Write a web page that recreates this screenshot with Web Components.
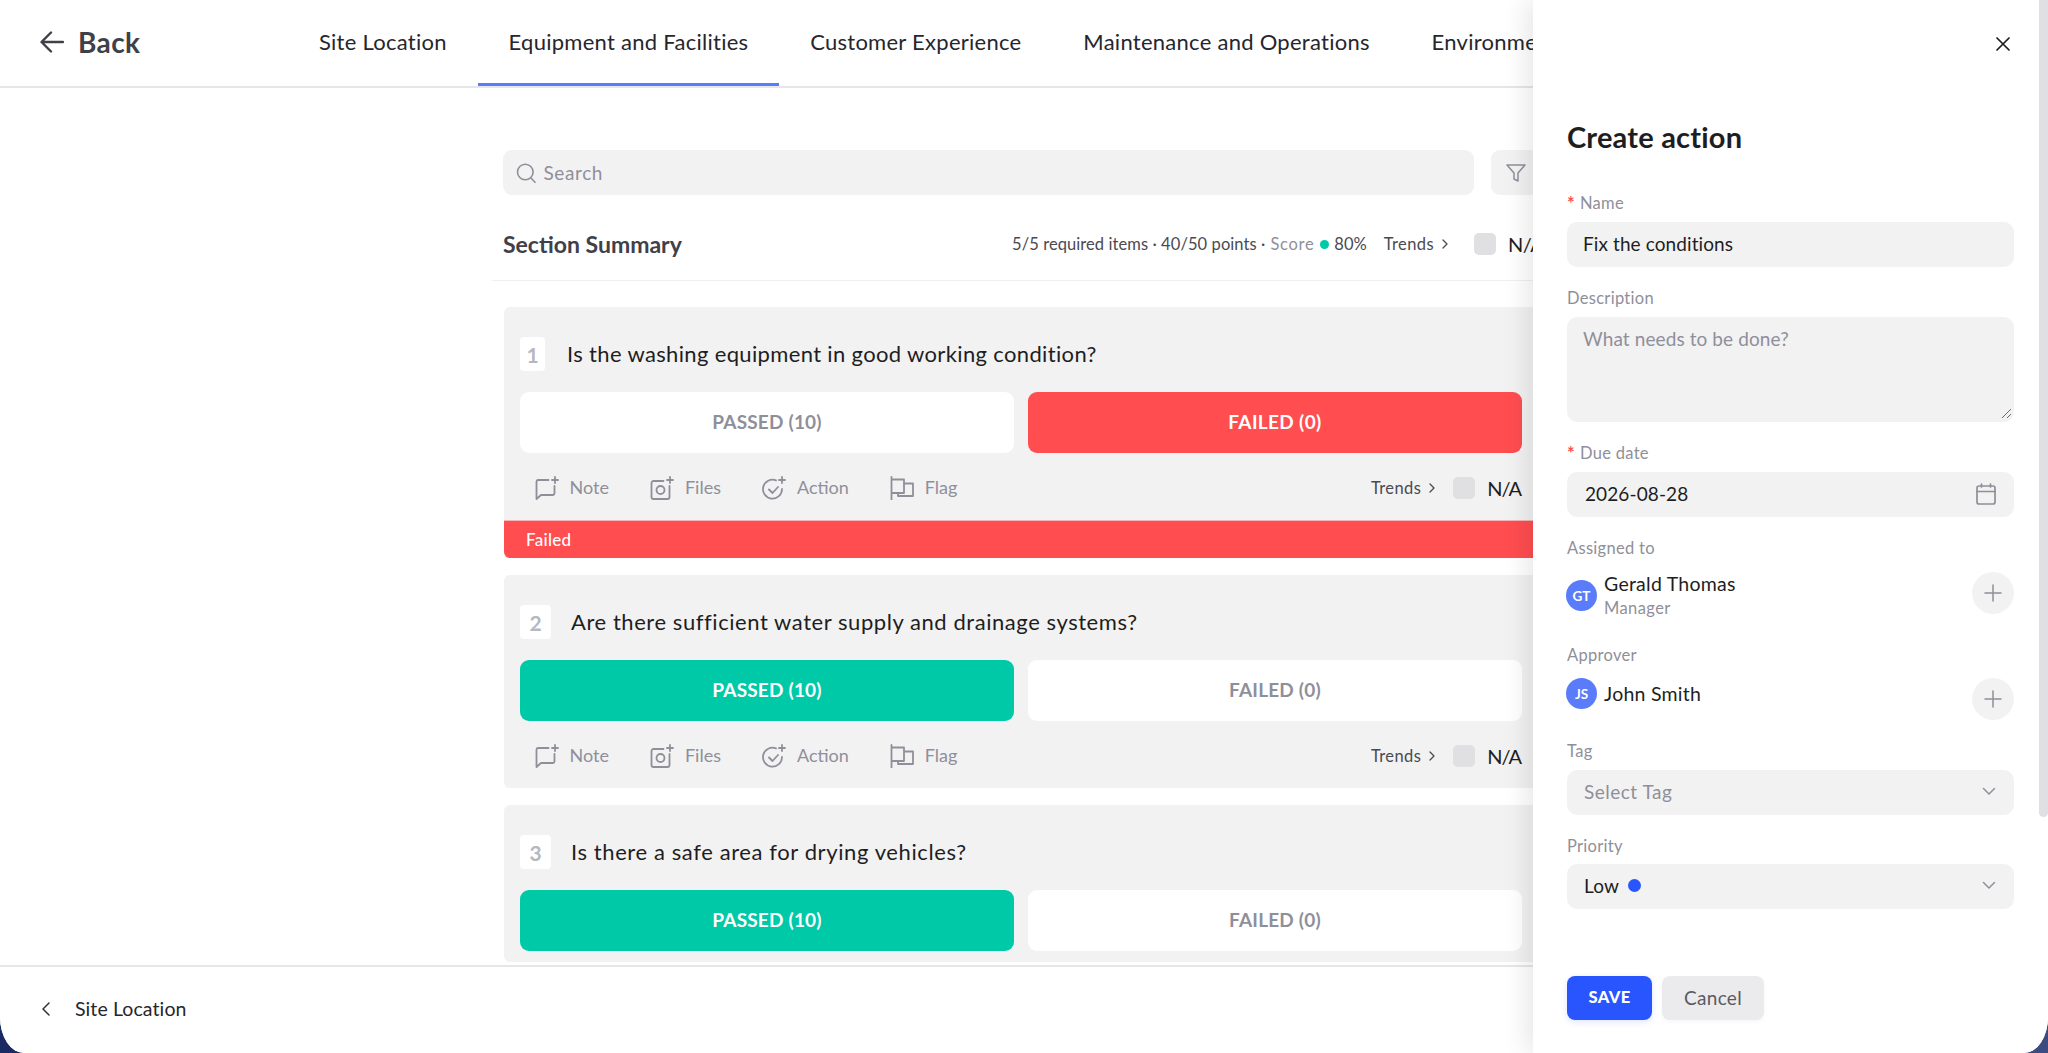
<!DOCTYPE html>
<html lang="en"><head><meta charset="utf-8"><title>Create action</title>
<style>
html,body{margin:0;height:100%;overflow:hidden;background:linear-gradient(90deg,#1c2a63,#3d4c80);font-family:Lato,"Liberation Sans",sans-serif}
</style></head><body>
<app-shell>
  <top-bar>
    <nav-tab>Site Location</nav-tab>
    <nav-tab active>Equipment and Facilities</nav-tab>
    <nav-tab>Customer Experience</nav-tab>
    <nav-tab>Maintenance and Operations</nav-tab>
    <nav-tab>Environment</nav-tab>
  </top-bar>
  <main-area>
    <search-row></search-row>
    <section-summary></section-summary>
    <q-card num="1" state="failed" w="25" gap="22" ls=".35">Is the washing equipment in good working condition?</q-card>
    <q-card num="2" state="passed" w="31" gap="20" ls=".56">Are there sufficient water supply and drainage systems?</q-card>
    <q-card num="3" state="passed" w="31" gap="20" ls=".6" noacts>Is there a safe area for drying vehicles?</q-card>
  </main-area>
  <foot-bar>Site Location</foot-bar>
  <action-drawer>
    <form-field label="Name" required><text-box>Fix the conditions</text-box></form-field>
    <form-field label="Description"><text-box area muted>What needs to be done?</text-box></form-field>
    <form-field label="Due date" required><text-box icon="calendar" date>2026-08-28</text-box></form-field>
    <form-field label="Assigned to" tight><person-row initials="GT" name="Gerald Thomas" role="Manager"></person-row></form-field>
    <form-field label="Approver" tight up><person-row initials="JS" name="John Smith"></person-row></form-field>
    <form-field label="Tag"><text-box icon="chev" muted select>Select Tag</text-box></form-field>
    <form-field label="Priority" up><text-box icon="chev" select dot>Low</text-box></form-field>
  </action-drawer>
</app-shell>
<script>
const G='#8f8f9a';
const ICONS={
 back:'<svg viewBox="0 0 24 22" width="24" height="22" fill="none" stroke="#3f4048" stroke-width="2.4" stroke-linecap="round" stroke-linejoin="round"><path d="M23 11H2M11 1.5 1.5 11l9.500 9.500"/></svg>',
 search:'<svg viewBox="0 0 20 20" width="20" height="20" fill="none" stroke="#8f8f9a" stroke-width="1.6" stroke-linecap="round"><circle cx="9.300" cy="9" r="7.800"/><path d="m15 15 4 4.300"/></svg>',
 filter:'<svg viewBox="0 0 20 18" width="20" height="18" fill="none" stroke="#8f8f9a" stroke-width="1.500" stroke-linejoin="round"><path d="M1 1h18l-7 8v8l-4-2V9z"/></svg>',
 note:'<svg viewBox="0 0 24 24" width="24" height="24" fill="none" stroke="#8f8f9a" stroke-width="1.800" stroke-linecap="round" stroke-linejoin="round"><path d="M13.500 4H3a1.800 1.800 0 0 0-1.500 1.800V23l4.500-4h12a1.800 1.800 0 0 0 1.500-1.800V10M20 1v6M17 4h6"/></svg>',
 files:'<svg viewBox="0 0 24 24" width="24" height="24" fill="none" stroke="#8f8f9a" stroke-width="1.800" stroke-linecap="round" stroke-linejoin="round"><path d="M13.500 5H3.500a2 2 0 0 0-2 2v14a2 2 0 0 0 2 2h14a2 2 0 0 0 2-2V10M20 1v6M17 4h6"/><circle cx="10.500" cy="14" r="4"/></svg>',
 action:'<svg viewBox="0 0 24 24" width="24" height="24" fill="none" stroke="#8f8f9a" stroke-width="1.800" stroke-linecap="round" stroke-linejoin="round"><path d="M14 4.300A9.500 9.500 0 1 0 20 13M7 13.500l3.500 3.500 5.500-6M20 1v6M17 4h6"/></svg>',
 flag:'<svg viewBox="0 0 24 24" width="24" height="24" fill="none" stroke="#8f8f9a" stroke-width="1.800" stroke-linecap="round" stroke-linejoin="round"><path d="M1.500 1v23M1.500 3.500H14V17H1.500M14 7.500h9V20H8v-3"/></svg>',
 chevr:'<svg viewBox="0 0 6 10" width="6" height="10" fill="none" stroke="#4a4a52" stroke-width="1.300" stroke-linecap="round" stroke-linejoin="round"><path d="m1 1 4 4-4 4"/></svg>',
 chevl:'<svg viewBox="0 0 8 14" width="8" height="14" fill="none" stroke="#33333a" stroke-width="1.500" stroke-linecap="round" stroke-linejoin="round"><path d="M7 1 1 7l6 6"/></svg>',
 x:'<svg viewBox="0 0 14 14" width="14" height="14" fill="none" stroke="#1e1e22" stroke-width="1.700" stroke-linecap="round"><path d="m1 1 12 12M13 1 1 13"/></svg>',
 calendar:'<svg viewBox="0 0 20 22" width="20" height="22" fill="none" stroke="#8f8f9a" stroke-width="1.700" stroke-linecap="round" stroke-linejoin="round"><rect x="1" y="3" width="18" height="18" rx="2"/><path d="M1 8.500h18M5.500 1v3M14.500 1v3"/></svg>',
 chev:'<svg viewBox="0 0 14 9" width="14" height="9" fill="none" stroke="#8f8f9a" stroke-width="1.500" stroke-linecap="round" stroke-linejoin="round"><path d="m1.500 1.500 5.500 5.500 5.500-5.500"/></svg>',
 plus:'<svg viewBox="0 0 18 18" width="18" height="18" fill="none" stroke="#8f8f9a" stroke-width="1.500" stroke-linecap="round"><path d="M9 1v16M1 9h16"/></svg>'
};
function def(name,render){
  customElements.define(name,class extends HTMLElement{
    connectedCallback(){ if(this.shadowRoot) return; this.attachShadow({mode:'open'}).innerHTML=render(this); }
  });
}
def('ui-icon',e=>`<style>:host{display:inline-flex;flex:none;line-height:0}</style>${ICONS[e.getAttribute('name')]}`);

def('app-shell',()=>`<style>
:host{display:flex;flex-direction:column;position:relative;height:1053px;width:2048px;overflow:hidden;background:#fff;border-radius:0 0 24px 24px/0 0 36px 36px;color:#1e1e22;font-family:Lato,"Liberation Sans",sans-serif}
</style><slot></slot>`);

def('top-bar',()=>`<style>
:host{display:flex;flex:none;height:88px;box-sizing:border-box;border-bottom:2px solid #e6e6e8;overflow:hidden}
.back{display:flex;align-items:center;gap:14px;width:248px;padding-left:40px;flex:none;font-size:28px;font-weight:700;color:#3f4048;letter-spacing:.4px;padding-bottom:3px}
.tabs{display:flex;white-space:nowrap}
</style><div class="back"><ui-icon name="back"></ui-icon><span>Back</span></div><div class="tabs"><slot></slot></div>`);

def('nav-tab',e=>`<style>
:host{display:flex;align-items:center;padding:0 30.900px 3px;height:86px;box-sizing:border-box;font-size:22px;color:#26262c;letter-spacing:.27px;flex:none;
 ${e.hasAttribute('active')?'box-shadow:inset 0 -3px 0 #5b7cfa;':''}}
</style><slot></slot>`);

def('main-area',()=>`<style>
:host{display:block;flex:1;min-height:0;overflow:hidden;box-sizing:border-box;padding:62px 509.500px 0 503.500px}
</style><slot></slot>`);

def('search-row',()=>`<style>
:host{display:flex;gap:17px;height:45px;margin-left:-1px;font-size:19px;color:#8f8f9a}
.s{flex:1;display:flex;align-items:center;gap:8px;background:#f2f2f2;border-radius:9px;padding-left:13px}
.f{flex:none;width:48px;display:flex;align-items:center;padding-left:15px;box-sizing:border-box;background:#f2f2f2;border-radius:9px}
span{letter-spacing:.6px}
</style><div class="s"><ui-icon name="search"></ui-icon><span>Search</span></div><div class="f"><ui-icon name="filter"></ui-icon></div>`);

def('section-summary',()=>`<style>
:host{display:flex;align-items:center;height:68px;padding-bottom:2px;margin:15px 0 26px -11.500px;padding-left:11px;box-sizing:content-box;border-bottom:1px solid #f0f0f1;width:1046px;color:#4a4a52;font-size:16.500px;white-space:nowrap;position:relative}
b{font-size:23px;font-weight:700;color:#3f4048;flex:none;width:509px}
.m{display:flex;align-items:center}
.f{letter-spacing:.08px}
.sc{color:#8f8f9a;margin-left:5px;letter-spacing:.7px}
.dot{width:9px;height:9px;border-radius:50%;background:#00c9a7;margin:0 5px 0 6px}
.t{margin-left:17px;margin-right:8px;color:#4a4a52;letter-spacing:.4px}
.c{width:22px;height:22px;border-radius:5px;background:#e0e0e2;margin-left:26px}
.na{font-size:20px;letter-spacing:-.5px;color:#1e1e22;margin-left:12px}
</style><b>Section Summary</b><div class="m"><span class="f">5/5 required items · 40/50 points ·</span><span class="sc">Score</span><i class="dot"></i><span>80%</span><span class="t">Trends</span><ui-icon name="chevr"></ui-icon><i class="c"></i><span class="na">N/A</span></div>`);

def('act-item',e=>`<style>
:host{display:flex;align-items:center;gap:10.500px;color:#8f8f9a;font-size:18px}
span{position:relative;top:-1px}
</style><ui-icon name="${e.getAttribute('icon')}"></ui-icon><span><slot></slot></span>`);

def('q-card',e=>{const s=e.getAttribute('state');const w=e.getAttribute('w');
 const acts=e.hasAttribute('noacts')?'':`<div class="acts"><act-item icon="note">Note</act-item><act-item icon="files">Files</act-item><act-item icon="action">Action</act-item><act-item icon="flag">Flag</act-item>
<div class="r"><span>Trends</span><ui-icon name="chevr"></ui-icon><i class="c"></i><span class="na">N/A</span></div></div>`;
 return `<style>
:host{display:block;width:1035px;background:#f2f2f2;border-radius:6px;margin-bottom:17px;overflow:hidden;flex:none}
.body{padding:30px 16.500px 11px}
.q{display:flex;align-items:center;gap:${e.getAttribute('gap')}px;height:34px;font-size:22px;color:#1e1e22;white-space:nowrap}
.tx{letter-spacing:${e.getAttribute('ls')}px;padding-bottom:2px}
.n{width:${w}px;height:34px;background:#fff;border-radius:4px;display:flex;align-items:center;justify-content:center;color:#b7b7bf;font-weight:700;font-size:21px;flex:none}
.btns{display:flex;gap:14px;margin-top:21px}
.b{flex:1;height:61px;box-sizing:border-box;padding-bottom:2px;border-radius:9px;background:#fff;color:#8f8f9a;display:flex;align-items:center;justify-content:center;font-weight:700;font-size:19px;letter-spacing:.2px}
.b.p{background:#00c9a7;color:#fff}
.b.f{background:#ff4d50;color:#fff;letter-spacing:.35px}
.acts{display:flex;align-items:center;height:42px;margin-top:14px;padding-left:15px;gap:41.500px}
.r{margin-left:auto;display:flex;align-items:center;color:#4a4a52;font-size:16.500px;letter-spacing:.4px}
.r ui-icon{margin-left:8px}
.c{width:22px;height:22px;border-radius:5px;background:#e0e0e2;margin-left:18px}
.na{font-size:20px;letter-spacing:-1px;color:#1e1e22;margin-left:12px;margin-right:1px}
.bar{height:38px;background:#ff4d50;color:#fff;font-size:17px;letter-spacing:.3px;font-weight:500;display:flex;align-items:center;padding-left:22.500px;border-top:1px solid #f3b5b6;box-sizing:border-box}
</style><div class="body"><div class="q"><span class="n">${e.getAttribute('num')}</span><span class="tx"><slot></slot></span></div>
<div class="btns"><div class="b ${s==='passed'?'p':''}">PASSED (10)</div><div class="b ${s==='failed'?'f':''}">FAILED (0)</div></div>
${acts}</div>
${s==='failed'?'<div class="bar">Failed</div>':''}`});

def('foot-bar',()=>`<style>
:host{display:flex;flex:none;align-items:center;gap:25px;height:88px;box-sizing:border-box;border-top:2px solid #e6e6e8;padding:0 0 3px 42px;background:#fff;font-size:19.500px;color:#26262c;letter-spacing:.1px}
</style><ui-icon name="chevl"></ui-icon><slot></slot>`);

def('action-drawer',()=>`<style>
:host{position:absolute;top:0;right:0;bottom:0;width:515px;background:#fff;box-shadow:-6px 0 26px rgba(0,0,0,.1);border-radius:0 0 24px 0/0 0 36px 0;box-sizing:border-box;padding:0 34px 0 34px;overflow:hidden;display:block}
.sb{position:absolute;top:0;right:0;width:9px;height:817px;background:#e0e0e2;border-radius:0 0 5px 5px}
.x{display:flex;justify-content:flex-end;padding:37px 4px 0 0;height:33px}
h2{margin:0;font-size:29px;font-weight:700;color:#1e1e22;line-height:34px;margin-top:50px;margin-bottom:38.500px;letter-spacing:.2px}
.btns{display:flex;gap:10px;margin-top:67px}
.save,.cancel{height:44px;box-sizing:border-box;padding-bottom:2px;border-radius:8px;display:flex;align-items:center;justify-content:center}
.save{width:85px;background:#2955ff;color:#fff;font-weight:900;font-size:16.500px;letter-spacing:.4px;box-shadow:0 2px 6px rgba(41,85,255,.15)}
.cancel{width:102px;background:#ebebed;color:#5a5a64;font-size:19px;letter-spacing:.3px;box-shadow:0 2px 5px rgba(0,0,0,.04)}
</style><div class="sb"></div><div class="x"><ui-icon name="x"></ui-icon></div><h2>Create action</h2><slot></slot>
<div class="btns"><div class="save">SAVE</div><div class="cancel">Cancel</div></div>`);

def('form-field',e=>`<style>
:host{display:block;margin-bottom:21px}
.l{height:20px;line-height:20px;font-size:16.500px;color:#8f8f9a;display:flex;gap:5px;margin-bottom:${(e.hasAttribute('tight')?14:9)-(e.hasAttribute('up')?1:0)}px;letter-spacing:.3px}
.r{color:#ff4d50;font-size:18px;font-weight:700}
</style><div class="l">${e.hasAttribute('required')?'<span class="r">*</span>':''}<span>${e.getAttribute('label')}</span></div><slot></slot>`);

def('text-box',e=>{const ic=e.getAttribute('icon');const a=e.hasAttribute('area');const m=e.hasAttribute('muted')&&e.hasAttribute('select');return `<style>
:host{display:flex;align-items:${a?'flex-start':'center'};box-sizing:border-box;height:${a?105.5:45}px;width:447px;background:#f2f2f2;border-radius:10px;padding:${a?'10px':'0'} 18px ${a?0:2}px ${e.hasAttribute('select')?17:e.hasAttribute('date')?18:16}px;font-size:19px;color:${e.hasAttribute('muted')?G:'#1e1e22'};position:relative;letter-spacing:${m?.5:.1}px}
.sp{flex:1}
.dot{width:13px;height:13px;border-radius:50%;background:#2955ff;margin-left:9px}
svg.h{position:absolute;right:2px;bottom:3px}
</style><slot></slot>${e.hasAttribute('dot')?'<i class="dot"></i>':''}<span class="sp"></span>${ic?`<ui-icon name="${ic}"></ui-icon>`:''}
${a?'<svg class="h" width="11" height="11" viewBox="0 0 11 11" fill="none" stroke="#6a6a72" stroke-width="1"><path d="M1 10 10 1M6 10l4-4"/></svg>':''}`});

def('person-row',e=>{const r=e.getAttribute('role');return `<style>
:host{display:flex;justify-content:space-between;align-items:flex-start;${r?'padding-bottom:5px;':''}width:448px;margin-left:-1px}
.l{display:flex;align-items:center;gap:7px}
.a{width:31px;height:31px;border-radius:50%;background:#5b7cfa;color:#fff;font-size:13.500px;font-weight:700;display:flex;align-items:center;justify-content:center;flex:none}
.n{font-size:19.500px;line-height:24px;color:#1e1e22;letter-spacing:.25px}
.m{font-size:16.500px;line-height:22px;color:#8f8f9a;margin-top:1px;letter-spacing:.4px}
.p{width:42px;height:42px;border-radius:50%;background:#f2f2f2;display:flex;align-items:center;justify-content:center}
</style><div class="l"><span class="a">${e.getAttribute('initials')}</span><div><div class="n">${e.getAttribute('name')}</div>${r?`<div class="m">${r}</div>`:''}</div></div><div class="p"><ui-icon name="plus"></ui-icon></div>`});
</script>
</body></html>
